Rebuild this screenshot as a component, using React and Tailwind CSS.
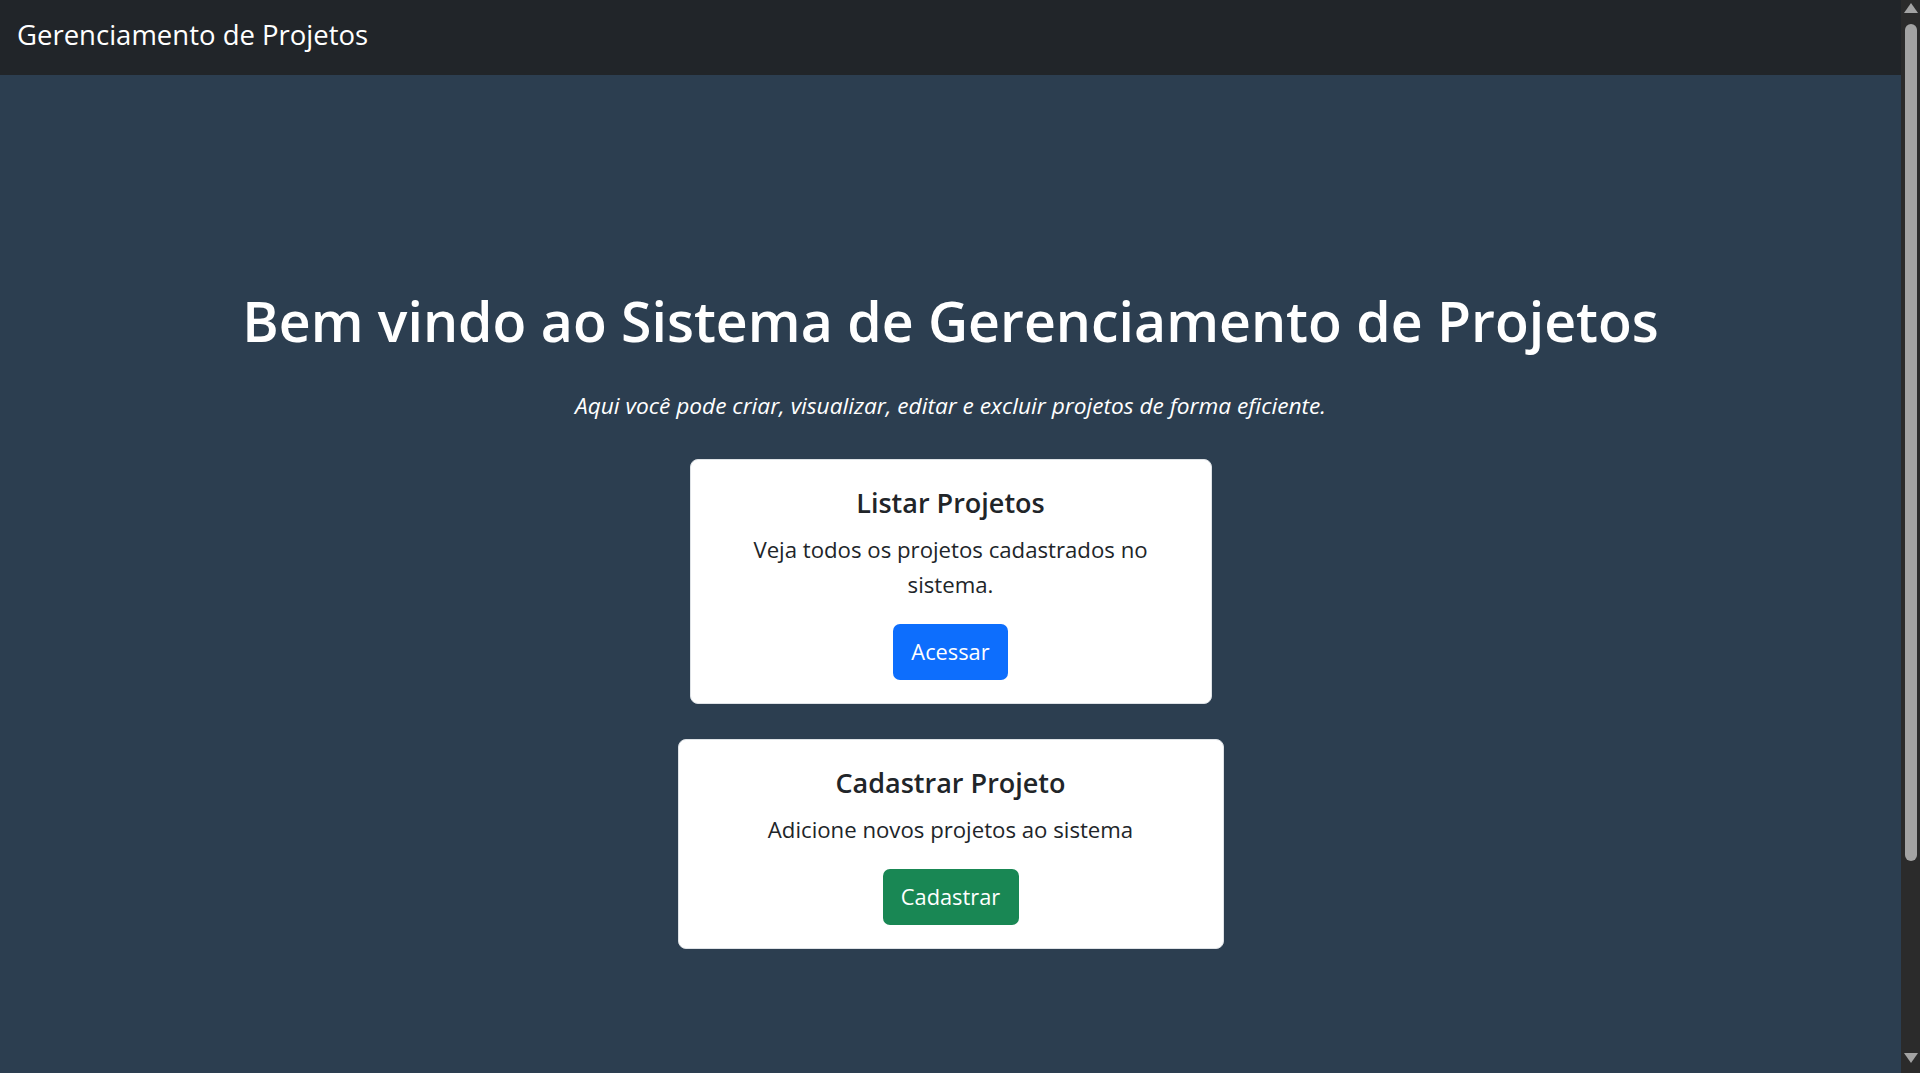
import React from 'react';

const FONT = { fontFamily: '"Open Sans", "Noto Sans", sans-serif' };

const cards = [
    {
        title: 'Listar Projetos',
        text: 'Veja todos os projetos cadastrados no sistema.',
        action: 'Acessar',
        width: 'w-[522px]',
        button: 'bg-[#0d6efd] w-[115px]',
    },
    {
        title: 'Cadastrar Projeto',
        text: 'Adicione novos projetos ao sistema',
        action: 'Cadastrar',
        width: 'w-[546px]',
        button: 'bg-[#198754] w-[136px]',
    },
];

export default function App() {
    return (
        <div className="h-screen flex overflow-hidden bg-[#2c3e50]" style={FONT}>
            <div className="flex-1 flex flex-col">
                {/* Navbar */}
                <nav className="h-[75px] shrink-0 bg-[#212529] flex items-center px-[17px] pb-[5px]">
                    <span className="text-white text-[27.5px]">Gerenciamento de Projetos</span>
                </nav>

                {/* Main */}
                <main className="flex-1 flex flex-col items-center text-center pt-[214px]">
                    <h1 className="text-white text-[55.4px] font-semibold leading-[64px]">
                        Bem vindo ao Sistema de Gerenciamento de Projetos
                    </h1>
                    <p className="text-white italic text-[22.7px] leading-[32px] mt-[37px]">
                        Aqui você pode criar, visualizar, editar e excluir projetos de forma eficiente.
                    </p>

                    <div className="flex flex-col items-center gap-[35px] mt-[37px]">
                        {cards.map((card, idx) => (
                            <div key={idx}
                                className={`${card.width} bg-white rounded-[8px] border border-[#dee2e6] flex flex-col items-center px-[40px] pt-[27px] pb-[23px]`}>
                                <h5 className="text-[#212529] text-[27px] font-semibold leading-[32px]">{card.title}</h5>
                                <p className="text-[#212529] text-[22.2px] leading-[35px] mt-[13px] max-w-[420px]">{card.text}</p>
                                <button className={`${card.button} h-[56px] mt-[22px] rounded-[7px] text-white text-[21.8px]`}>
                                    {card.action}
                                </button>
                            </div>
                        ))}
                    </div>
                </main>
            </div>

            {/* Scrollbar */}
            <aside className="w-[19px] shrink-0 bg-[#2b2b2b] flex flex-col items-center pt-[3px] pb-[10px]">
                <div className="w-0 h-0 border-x-[7px] border-x-transparent border-b-[10px] border-b-[#a3a3a3]" />
                <div className="w-[12px] h-[837px] mt-[11px] rounded-full bg-[#a3a3a3]" />
                <div className="flex-1" />
                <div className="w-0 h-0 border-x-[7px] border-x-transparent border-t-[10px] border-t-[#a3a3a3]" />
            </aside>
        </div>
    );
}
